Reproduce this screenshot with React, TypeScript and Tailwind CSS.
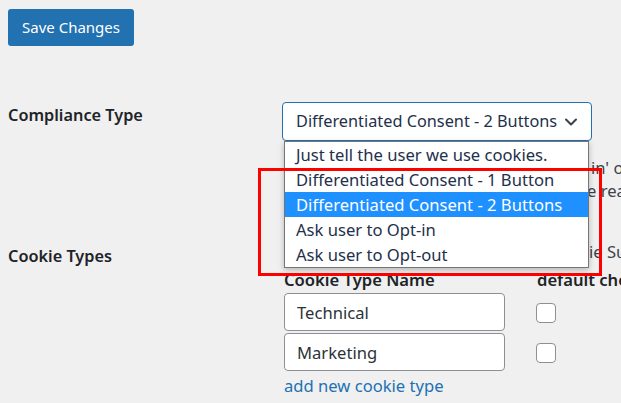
import { ChevronDown } from 'lucide-react';

const options = [
  'Just tell the user we use cookies.',
  'Differentiated Consent - 1 Button',
  'Differentiated Consent - 2 Buttons',
  'Ask user to Opt-in',
  'Ask user to Opt-out',
];

const cookieTypes = ['Technical', 'Marketing'];

export default function App() {
  const selected = options[2];

  return (
    <div
      className="relative h-[403px] w-full overflow-hidden bg-[#f0f0f1] pl-2 pt-[9px] text-[16.6px] text-[#1d2327]"
      style={{ fontFamily: '"Noto Sans", "Open Sans", sans-serif' }}
    >
      <button className="h-[37px] w-[126px] rounded-[3px] bg-[#2271b1] text-[15px] text-white">
        Save Changes
      </button>

      {/* Compliance type */}
      <div className="mt-[56px] flex">
        <div className="w-[274px] shrink-0 pt-[1px] text-[16.3px] font-semibold leading-[24px]">Compliance Type</div>
        <div className="min-w-0 flex-1">
          <div className="relative w-[310px]">
            <div className="flex h-[39px] items-center rounded-[4px] border border-[#2271b1] bg-white pl-[13px] pr-[10px] text-[16.3px] text-[#23304a]">
              <span className="whitespace-nowrap">{selected}</span>
              <ChevronDown className="ml-auto size-[20px] text-[#3c434a]" strokeWidth={2.5} />
            </div>
          </div>
          <div className="mt-[15px] whitespace-nowrap leading-[23px] text-[#3c434a]">
            <p className="pl-[309px]">in' or 'Opt-out' if you need explicit consent.</p>
            <p className="pl-[305px]">e read about the options.</p>
          </div>
        </div>
      </div>

      {/* Cookie types */}
      <div className="mt-[38px] flex">
        <div className="w-[274px] shrink-0 pt-[4px] text-[16.3px] font-semibold leading-[24px]">Cookie Types</div>
        <div className="min-w-0 flex-1 pl-[2px]">
          <p className="whitespace-nowrap pl-[305px] leading-[23px] text-[#3c434a]">ie Support</p>
          <div className="mt-[5px] flex whitespace-nowrap font-semibold leading-[24px]">
            <span className="w-[253px] shrink-0">Cookie Type Name</span>
            <span>default checked</span>
          </div>
          <div className="mt-[1px] flex flex-col gap-[2px]">
            {cookieTypes.map((name) => (
              <div key={name} className="flex items-center">
                <input
                  defaultValue={name}
                  className="h-[38px] w-[221px] rounded-[4px] border border-[#8c8f94] bg-white px-[12px] text-[16.6px] text-[#2c3338] outline-none"
                />
                <span className="ml-[31px] mt-[2px] size-[20px] rounded-[4px] border border-[#8c8f94] bg-white" />
              </div>
            ))}
          </div>
          <a className="mt-[3px] block leading-[23px] text-[#2271b1]">add new cookie type</a>
        </div>
      </div>

      {/* open dropdown list */}
      <ul className="absolute left-[284px] top-[141px] w-[305px] border border-[#767676] bg-white text-[16.6px] text-[#23304a] shadow-[0_2px_6px_rgba(0,0,0,0.25)]">
        {options.map((opt) => (
          <li
            key={opt}
            className={
              opt === selected
                ? 'h-[25px] whitespace-nowrap bg-[#1e90ff] pl-[11px] leading-[25px] text-white'
                : 'h-[25px] whitespace-nowrap pl-[11px] leading-[25px]'
            }
          >
            {opt}
          </li>
        ))}
      </ul>

      {/* annotation box */}
      <div className="absolute left-[258px] top-[168px] h-[108px] w-[344px] border-[3px] border-[#ff0000]" />
    </div>
  );
}
